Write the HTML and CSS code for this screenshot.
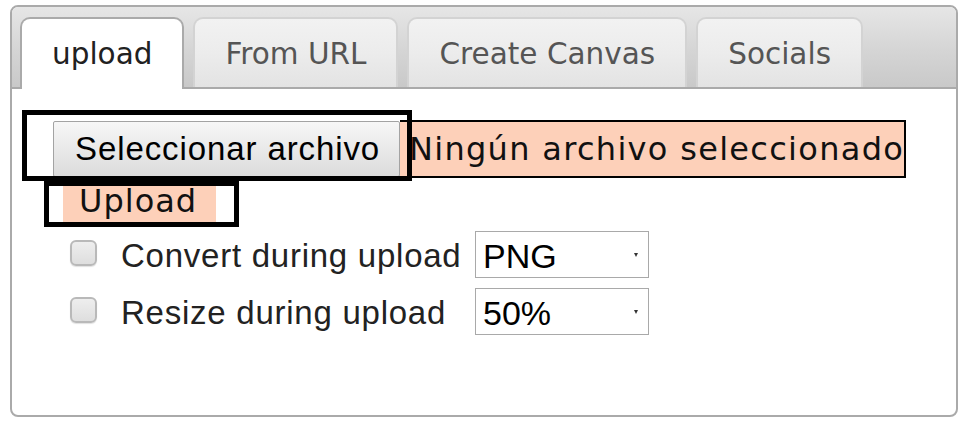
FILE: index.html
```html
<!DOCTYPE html>
<html lang="es">
<head>
<meta charset="utf-8">
<title>Upload</title>
<link rel="stylesheet" href="styles.css">
</head>
<body>
<div class="tabs">
  <ul class="nav">
    <li class="tab active">upload</li>
    <li class="tab">From URL</li>
    <li class="tab">Create Canvas</li>
    <li class="tab">Socials</li>
  </ul>
  <div class="panel">
    <div class="file-box">
      <button class="file-btn" type="button">Seleccionar archivo</button>
      <span class="file-name">Ningún archivo seleccionado</span>
    </div>
    <div class="upload-box">
      <button class="upload-btn" type="button">Upload</button>
    </div>
    <div class="options">
      <label class="opt">
        <input class="check" type="checkbox">
        <span class="opt-label">Convert during upload</span>
        <span class="sel"><select class="select"><option>PNG</option></select></span>
      </label>
      <label class="opt">
        <input class="check" type="checkbox">
        <span class="opt-label">Resize during upload</span>
        <span class="sel"><select class="select"><option>50%</option></select></span>
      </label>
    </div>
  </div>
</div>
</body>
</html>
```

FILE: styles.css
```css
* { box-sizing: border-box; }

body {
  margin: 0;
  padding: 5px 0 0 10px;
  background: #fff;
}

.tabs {
  width: 948px;
  height: 412px;
  border: 2px solid #aaaaaa;
  border-radius: 8px;
  background: #fff;
}

.nav {
  list-style: none;
  margin: 0;
  padding: 10px 0 0 8px;
  height: 82px;
  display: flex;
  align-items: flex-start;
  gap: 9px;
  border-bottom: 2px solid #aaaaaa;
  border-radius: 6px 6px 0 0;
  background: linear-gradient(#e6e6e6, #d6d6d6 50%, #c9c9c9);
}

.tab {
  height: 70px;
  padding: 3px 30px 0;
  border: 2px solid #d3d3d3;
  border-bottom: 0;
  border-radius: 10px 10px 0 0;
  background: linear-gradient(#f2f2f2, #ececec 50%, #e3e3e3);
  font-family: "DejaVu Sans", Verdana, sans-serif;
  font-size: 29.5px;
  line-height: 65px;
  color: #555555;
  white-space: nowrap;
}

.tab.active {
  height: 72px;
  margin-bottom: -2px;
  background: #fff;
  border-color: #aaaaaa;
  color: #212121;
}

.panel {
  padding: 26px 0 0 15px;
}

.file-box {
  width: 380px;
  height: 61px;
  outline: 5px solid #000;
  display: flex;
  align-items: flex-start;
  padding: 6px 0 0 26px;
  white-space: nowrap;
}

.file-btn {
  flex: none;
  margin: 0;
  width: 347px;
  height: 56px;
  padding: 0 0 0 21px;
  text-align: left;
  border: 1px solid #a3a3a3;
  border-radius: 2px;
  background: linear-gradient(#f7f7f7, #e9e9e9 50%, #dcdcdc);
  font-family: "Liberation Sans", Arial, sans-serif;
  font-size: 33px;
  letter-spacing: 0.9px;
  color: #000;
}

.file-name {
  flex: none;
  width: 506px;
  height: 58px;
  margin-top: -1px;
  padding-left: 9px;
  background: #fdd0b9;
  border: 2px solid #000;
  border-left: 0;
  font-family: "DejaVu Sans", Verdana, sans-serif;
  font-size: 32px;
  letter-spacing: 1.3px;
  line-height: 54px;
  color: #111;
}

.upload-box {
  width: 185px;
  height: 36px;
  margin: 11px 0 0 22px;
  outline: 5px solid #000;
  padding-left: 14px;
}

.upload-btn {
  display: block;
  margin: -1px 0 0 0;
  width: 153px;
  height: 38px;
  padding: 0 0 8px 16px;
  text-align: left;
  border: 0;
  background: #fdd0b9;
  font-family: "DejaVu Sans", Verdana, sans-serif;
  font-size: 32px;
  letter-spacing: 1px;
  line-height: 30px;
  color: #111;
}

.options {
  margin: 9px 0 0 43px;
  display: flex;
  flex-direction: column;
  gap: 10px;
}

.opt {
  display: flex;
  align-items: center;
  height: 47px;
}

.check {
  appearance: none;
  -webkit-appearance: none;
  flex: none;
  width: 27px;
  height: 26px;
  margin: 0 24px 4px 0;
  border: 2px solid #b9b9b9;
  border-radius: 6px;
  background: linear-gradient(#eeeeee, #dedede);
  box-shadow: 0 1px 1px rgba(0, 0, 0, 0.12);
}

.opt-label {
  flex: none;
  width: 354px;
  padding-top: 2px;
  font-family: "Liberation Sans", Arial, sans-serif;
  font-size: 33px;
  letter-spacing: 0.75px;
  color: #222;
  white-space: nowrap;
}

.sel {
  position: relative;
  flex: none;
  width: 174px;
  height: 47px;
}

.select {
  appearance: none;
  -webkit-appearance: none;
  display: block;
  width: 100%;
  height: 100%;
  margin: 0;
  padding: 2px 0 0 7px;
  border: 1px solid #a9a9a9;
  border-radius: 0;
  background: #fff;
  font-family: "Liberation Sans", Arial, sans-serif;
  font-size: 34px;
  color: #000;
}

.sel::after {
  content: "";
  position: absolute;
  right: 11px;
  top: 22px;
  border-left: 2px solid transparent;
  border-right: 2px solid transparent;
  border-top: 4px solid #333;
}
```
